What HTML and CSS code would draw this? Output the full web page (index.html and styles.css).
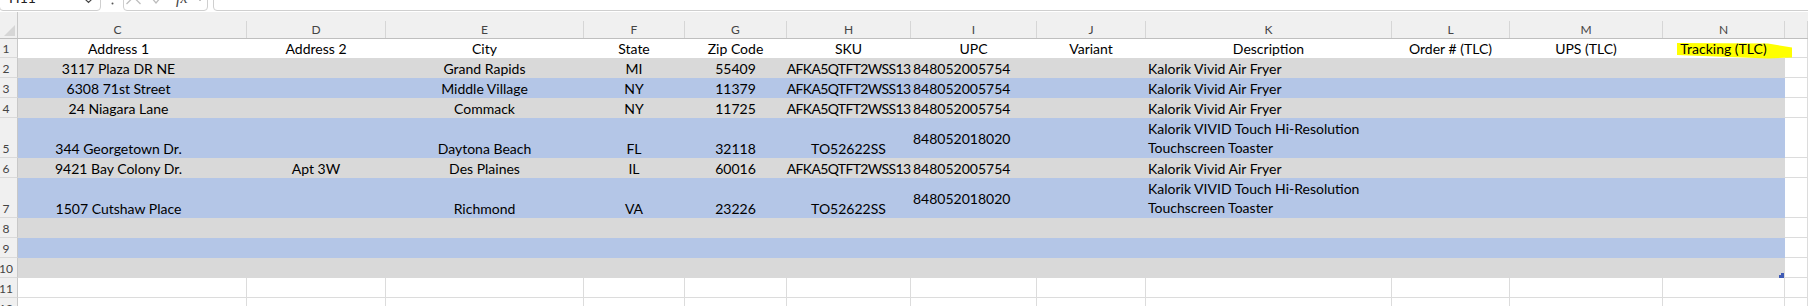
FILE: index.html
```html
<!DOCTYPE html>
<html>
<head>
<meta charset="utf-8">
<link rel="stylesheet" href="styles.css">
</head>
<body>
<div class="formula-bar">
  <div class="name-box"><span class="nb-text">H11</span><svg class="nb-chev" width="9" height="6" viewBox="0 0 9 6"><polyline points="1,1 4.5,4.5 8,1" fill="none" stroke="#444" stroke-width="1.2"/></svg></div>
  <div class="colon"><svg width="3" height="14" viewBox="0 0 3 14"><circle cx="1.5" cy="1.5" r="1" fill="#555"/><circle cx="1.5" cy="6.5" r="1" fill="#555"/><circle cx="1.5" cy="11.5" r="1" fill="#555"/></svg></div>
  <div class="fx-box"><svg width="83" height="26" viewBox="0 0 83 26"><line x1="2.5" y1="6" x2="16.5" y2="20" stroke="#bdbdbd" stroke-width="1.3"/><line x1="16.5" y1="6" x2="2.5" y2="20" stroke="#bdbdbd" stroke-width="1.3"/><polyline points="27,13 32,19 42,7" fill="none" stroke="#bdbdbd" stroke-width="1.3"/><text x="52" y="19" font-family="Liberation Serif, serif" font-style="italic" font-size="16" fill="#444">fx</text><polyline points="74,14 76,16.5 78,14" fill="none" stroke="#777" stroke-width="1"/></svg></div>
  <div class="formula-input"></div>
</div>

<div class="sheet">
  <!-- column headers -->
  <div class="corner"><svg width="11" height="11" viewBox="0 0 11 11"><polygon points="11,0 11,11 0,11" fill="#d6d6d6"/></svg></div>
  <div class="ch"><div class="lbl cc">C</div></div>
  <div class="ch"><div class="lbl">D</div></div>
  <div class="ch"><div class="lbl">E</div></div>
  <div class="ch"><div class="lbl">F</div></div>
  <div class="ch"><div class="lbl">G</div></div>
  <div class="ch"><div class="lbl">H</div></div>
  <div class="ch"><div class="lbl">I</div></div>
  <div class="ch"><div class="lbl">J</div></div>
  <div class="ch"><div class="lbl">K</div></div>
  <div class="ch"><div class="lbl">L</div></div>
  <div class="ch"><div class="lbl">M</div></div>
  <div class="ch"><div class="lbl">N</div></div>
  <div class="ch"><div class="lbl"></div></div>

  <!-- row 1 -->
  <div class="rh">1</div>
  <div class="c w ct cc">Address 1</div>
  <div class="c w ct">Address 2</div>
  <div class="c w ct">City</div>
  <div class="c w ct">State</div>
  <div class="c w ct">Zip Code</div>
  <div class="c w ct">SKU</div>
  <div class="c w ct">UPC</div>
  <div class="c w ct">Variant</div>
  <div class="c w ct">Description</div>
  <div class="c w ct">Order # (TLC)</div>
  <div class="c w ct">UPS (TLC)</div>
  <div class="c w ct hl"><svg class="marker" width="132" height="21" viewBox="0 0 132 21"><polygon points="14,4 105,4.5 129,8.5 129,18.5 105,19.5 14,16" fill="#ffff00"/></svg><span class="t">Tracking (TLC)</span></div>
  <div class="c"></div>

  <!-- row 2 -->
  <div class="rh">2</div>
  <div class="c g ct cc">3117 Plaza DR NE</div>
  <div class="c g"></div>
  <div class="c g ct">Grand Rapids</div>
  <div class="c g ct">MI</div>
  <div class="c g ct">55409</div>
  <div class="c g ct sku">AFKA5QTFT2WSS13</div>
  <div class="c g">848052005754</div>
  <div class="c g"></div>
  <div class="c g">Kalorik Vivid Air Fryer</div>
  <div class="c g"></div>
  <div class="c g"></div>
  <div class="c g"></div>
  <div class="c"></div>

  <!-- row 3 -->
  <div class="rh">3</div>
  <div class="c b ct cc">6308 71st Street</div>
  <div class="c b"></div>
  <div class="c b ct">Middle Village</div>
  <div class="c b ct">NY</div>
  <div class="c b ct">11379</div>
  <div class="c b ct sku">AFKA5QTFT2WSS13</div>
  <div class="c b">848052005754</div>
  <div class="c b"></div>
  <div class="c b">Kalorik Vivid Air Fryer</div>
  <div class="c b"></div>
  <div class="c b"></div>
  <div class="c b"></div>
  <div class="c"></div>

  <!-- row 4 -->
  <div class="rh">4</div>
  <div class="c g ct cc">24 Niagara Lane</div>
  <div class="c g"></div>
  <div class="c g ct">Commack</div>
  <div class="c g ct">NY</div>
  <div class="c g ct">11725</div>
  <div class="c g ct sku">AFKA5QTFT2WSS13</div>
  <div class="c g">848052005754</div>
  <div class="c g"></div>
  <div class="c g">Kalorik Vivid Air Fryer</div>
  <div class="c g"></div>
  <div class="c g"></div>
  <div class="c g"></div>
  <div class="c"></div>

  <!-- row 5 -->
  <div class="rh">5</div>
  <div class="c b ct cc">344 Georgetown Dr.</div>
  <div class="c b"></div>
  <div class="c b ct">Daytona Beach</div>
  <div class="c b ct">FL</div>
  <div class="c b ct">32118</div>
  <div class="c b ct">TO52622SS</div>
  <div class="c b mid">848052018020</div>
  <div class="c b"></div>
  <div class="c b wrap"><span>Kalorik VIVID Touch Hi-Resolution<br>Touchscreen Toaster</span></div>
  <div class="c b"></div>
  <div class="c b"></div>
  <div class="c b"></div>
  <div class="c"></div>

  <!-- row 6 -->
  <div class="rh">6</div>
  <div class="c g ct cc">9421 Bay Colony Dr.</div>
  <div class="c g ct">Apt 3W</div>
  <div class="c g ct">Des Plaines</div>
  <div class="c g ct">IL</div>
  <div class="c g ct">60016</div>
  <div class="c g ct sku">AFKA5QTFT2WSS13</div>
  <div class="c g">848052005754</div>
  <div class="c g"></div>
  <div class="c g">Kalorik Vivid Air Fryer</div>
  <div class="c g"></div>
  <div class="c g"></div>
  <div class="c g"></div>
  <div class="c"></div>

  <!-- row 7 -->
  <div class="rh">7</div>
  <div class="c b ct cc">1507 Cutshaw Place</div>
  <div class="c b"></div>
  <div class="c b ct">Richmond</div>
  <div class="c b ct">VA</div>
  <div class="c b ct">23226</div>
  <div class="c b ct">TO52622SS</div>
  <div class="c b mid">848052018020</div>
  <div class="c b"></div>
  <div class="c b wrap"><span>Kalorik VIVID Touch Hi-Resolution<br>Touchscreen Toaster</span></div>
  <div class="c b"></div>
  <div class="c b"></div>
  <div class="c b"></div>
  <div class="c"></div>

  <!-- row 8 -->
  <div class="rh">8</div>
  <div class="c g"></div><div class="c g"></div><div class="c g"></div><div class="c g"></div>
  <div class="c g"></div><div class="c g"></div><div class="c g"></div><div class="c g"></div>
  <div class="c g"></div><div class="c g"></div><div class="c g"></div><div class="c g"></div>
  <div class="c"></div>

  <!-- row 9 -->
  <div class="rh">9</div>
  <div class="c b"></div><div class="c b"></div><div class="c b"></div><div class="c b"></div>
  <div class="c b"></div><div class="c b"></div><div class="c b"></div><div class="c b"></div>
  <div class="c b"></div><div class="c b"></div><div class="c b"></div><div class="c b"></div>
  <div class="c"></div>

  <!-- row 10 -->
  <div class="rh">10</div>
  <div class="c g"></div><div class="c g"></div><div class="c g"></div><div class="c g"></div>
  <div class="c g"></div><div class="c g"></div><div class="c g"></div><div class="c g"></div>
  <div class="c g"></div><div class="c g"></div><div class="c g"></div>
  <div class="c g hl"><svg class="handle" width="5" height="5" viewBox="0 0 5 5"><polygon points="2,0 5,0 5,5 0,5 0,2 2,2" fill="#3f5bb5"/></svg></div>
  <div class="c"></div>

  <!-- row 11 -->
  <div class="rh">11</div>
  <div class="c"></div><div class="c"></div><div class="c"></div><div class="c"></div>
  <div class="c"></div><div class="c"></div><div class="c"></div><div class="c"></div>
  <div class="c"></div><div class="c"></div><div class="c"></div><div class="c"></div>
  <div class="c"></div>

  <!-- row 12 -->
  <div class="rh">12</div>
  <div class="c"></div><div class="c"></div><div class="c"></div><div class="c"></div>
  <div class="c"></div><div class="c"></div><div class="c"></div><div class="c"></div>
  <div class="c"></div><div class="c"></div><div class="c"></div><div class="c"></div>
  <div class="c"></div>
</div>
</body>
</html>
```

FILE: styles.css
```css
* { box-sizing: border-box; }

body {
  margin: 0;
  width: 1808px;
  height: 306px;
  overflow: hidden;
  background: #ffffff;
  font-family: Lato, "Liberation Sans", sans-serif;
}

/* ---------- formula bar ---------- */
.formula-bar {
  display: flex;
  height: 28px;
  margin-top: -17px;
}

.name-box {
  width: 102px;
  margin-left: -1px;
  border: 1px solid #cfcfcf;
  border-radius: 4px;
  display: flex;
  align-items: flex-start;
  padding: 5px 7px 0 9px;
  font-size: 14px;
  line-height: 17px;
  color: #222;
}

.nb-chev {
  margin-left: auto;
  margin-top: 9px;
}

.colon {
  width: 3px;
  margin-left: 10px;
  display: flex;
  align-items: flex-end;
  padding-bottom: 5px;
}

.fx-box {
  width: 85px;
  margin-left: 9px;
  border: 1px solid #cfcfcf;
  border-radius: 4px;
  display: flex;
}

.formula-input {
  flex: 1;
  margin-left: 5px;
  margin-right: -10px;
  border: 1px solid #cfcfcf;
  border-radius: 4px;
}

/* ---------- sheet grid ---------- */
.sheet {
  margin-top: 1px;
  display: grid;
  grid-template-columns: 18px 229px 139px 198px 101px 102px 124px 126px 109px 246px 118px 153px 122px 1fr;
  grid-template-rows: 27px 19px 20px 20px 20px 40px 20px 40px 20px 20px 20px 20px 20px;
}

.corner {
  background: #f0f0f0;
  border-right: 1px solid #c8c8c8;
  border-bottom: 1px solid #bfbfbf;
  display: flex;
  align-items: flex-end;
  justify-content: flex-end;
  padding: 0 2px 2px 0;
}

.ch {
  background: #f0f0f0;
  border-bottom: 1px solid #bfbfbf;
  display: flex;
  align-items: flex-end;
}

.ch .lbl {
  flex: 1;
  height: 17px;
  border-right: 1px solid #d6d6d6;
  display: flex;
  align-items: center;
  justify-content: center;
  font-size: 12px;
  line-height: 17px;
  color: #444;
}

.rh {
  background: #f0f0f0;
  border-right: 1px solid #c8c8c8;
  border-bottom: 1px solid #dadada;
  display: flex;
  align-items: flex-end;
  justify-content: center;
  padding-right: 5px;
  font-size: 12px;
  line-height: 17px;
  color: #444;
  white-space: nowrap;
}

.c {
  border-right: 1px solid #dcdcdc;
  border-bottom: 1px solid #dcdcdc;
  display: flex;
  align-items: flex-end;
  padding: 0 2px;
  white-space: nowrap;
  font-size: 14px;
  line-height: 17px;
  color: #000;
  min-width: 0;
}

.c.w { background: #ffffff; border-color: #ffffff; }
.c.g { background: #d9d9d9; border-color: #d9d9d9; }
.c.b { background: #b4c6e7; border-color: #b4c6e7; }

.ct { justify-content: center; }
.cc { padding-right: 29px; }
.c.sku { letter-spacing: -0.65px; padding: 0; }
.c.mid { align-items: center; padding-top: 2px; }
.c.wrap { white-space: nowrap; line-height: 19px; padding-bottom: 0; }

.hl { position: relative; }

.marker {
  position: absolute;
  left: 0;
  top: 0;
  z-index: 1;
}

.hl .t {
  position: relative;
  z-index: 2;
}

.handle {
  position: absolute;
  right: 0;
  bottom: -1px;
}
```
